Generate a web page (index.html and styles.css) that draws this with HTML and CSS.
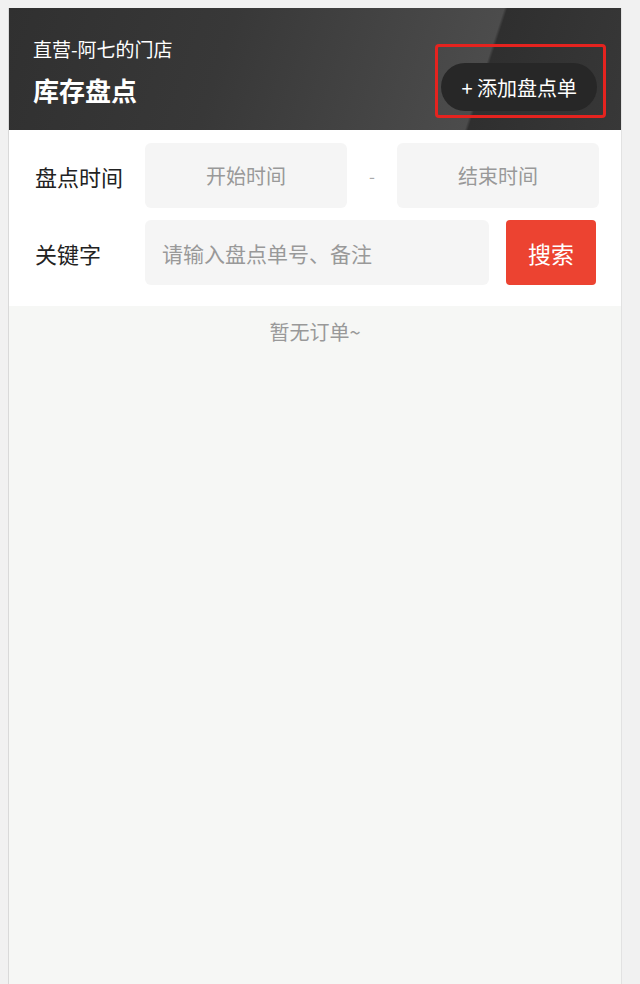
FILE: index.html
```html
<!DOCTYPE html>
<html lang="zh-CN">
<head>
    <meta charset="UTF-8">
    <meta name="viewport" content="width=device-width, initial-scale=1.0">
    <title>库存盘点</title>
    <link rel="stylesheet" href="styles.css">
</head>
<body>
    <div class="page">
        <div class="header">
            <div class="titles">
                <div class="store">直营-阿七的门店</div>
                <h1>库存盘点</h1>
            </div>
            <div class="add-wrap">
                <button class="add-btn">+ 添加盘点单</button>
            </div>
        </div>

        <div class="filter">
            <div class="row">
                <label>盘点时间</label>
                <div class="field center">开始时间</div>
                <span class="dash">-</span>
                <div class="field center">结束时间</div>
            </div>
            <div class="row">
                <label>关键字</label>
                <input class="field keyword" type="text" placeholder="请输入盘点单号、备注">
                <button class="search-btn">搜索</button>
            </div>
        </div>

        <div class="list">
            <p class="empty">暂无订单~</p>
        </div>
    </div>
</body>
</html>
```

FILE: styles.css
```css
body {
    margin: 0;
    padding: 8px 18px 0 8px;
    background: #f1f1f1;
    font-family: "Microsoft YaHei", "Noto Sans CJK SC", sans-serif;
    color: #222;
}
.page {
    min-height: 976px;
    background: #f6f7f5;
    border-left: 1px solid #d9d9d9;
    border-right: 1px solid #e2e2e2;
    display: flex;
    flex-direction: column;
}
.header {
    height: 122px;
    box-sizing: border-box;
    display: flex;
    justify-content: space-between;
    align-items: flex-start;
    padding: 0 15px 0 24px;
    color: #fff;
    background: linear-gradient(108deg, #303030 0%, #383838 35%, #4c4c4c 76%, #2f2f2f 76.5%, #383838 100%);
}
.titles { margin-top: 27px; }
.store { font-size: 19px; line-height: 28px; }
h1 { margin: 10px 0 0; font-size: 26px; line-height: 34px; font-weight: bold; }
.add-wrap {
    margin-top: 36px;
    padding: 16px 6px 4px 3px;
    border: 3px solid #e5231f;
    border-radius: 4px;
}
.add-btn {
    display: block;
    height: 48px;
    padding: 0 20px 0 20px;
    border: none;
    border-radius: 24px;
    background: #272727;
    color: #fff;
    font-family: inherit;
    font-size: 20px;
}
.filter {
    background: #fff;
    padding: 13px 22px 21px 26px;
    display: flex;
    flex-direction: column;
    gap: 12px;
}
.row { display: flex; align-items: center; }
.row label { width: 110px; font-size: 22px; }
.field {
    height: 65px;
    box-sizing: border-box;
    background: #f5f5f5;
    border: none;
    border-radius: 6px;
    font-family: inherit;
    font-size: 20px;
    color: #999;
}
.center {
    width: 202px;
    display: flex;
    align-items: center;
    justify-content: center;
}
.dash { width: 50px; text-align: center; color: #aaa; font-size: 17px; }
.keyword { width: 344px; padding: 0 17px; outline: none; font-size: 21px; }
.keyword::placeholder { color: #999; }
.search-btn {
    margin-left: 17px;
    width: 90px;
    height: 65px;
    border: none;
    border-radius: 4px;
    background: #ec4331;
    color: #fff;
    font-family: inherit;
    font-size: 23px;
}
.list { flex: 1; }
.empty { margin: 12px 0 0; text-align: center; font-size: 20px; line-height: 28px; color: #999; }
```
